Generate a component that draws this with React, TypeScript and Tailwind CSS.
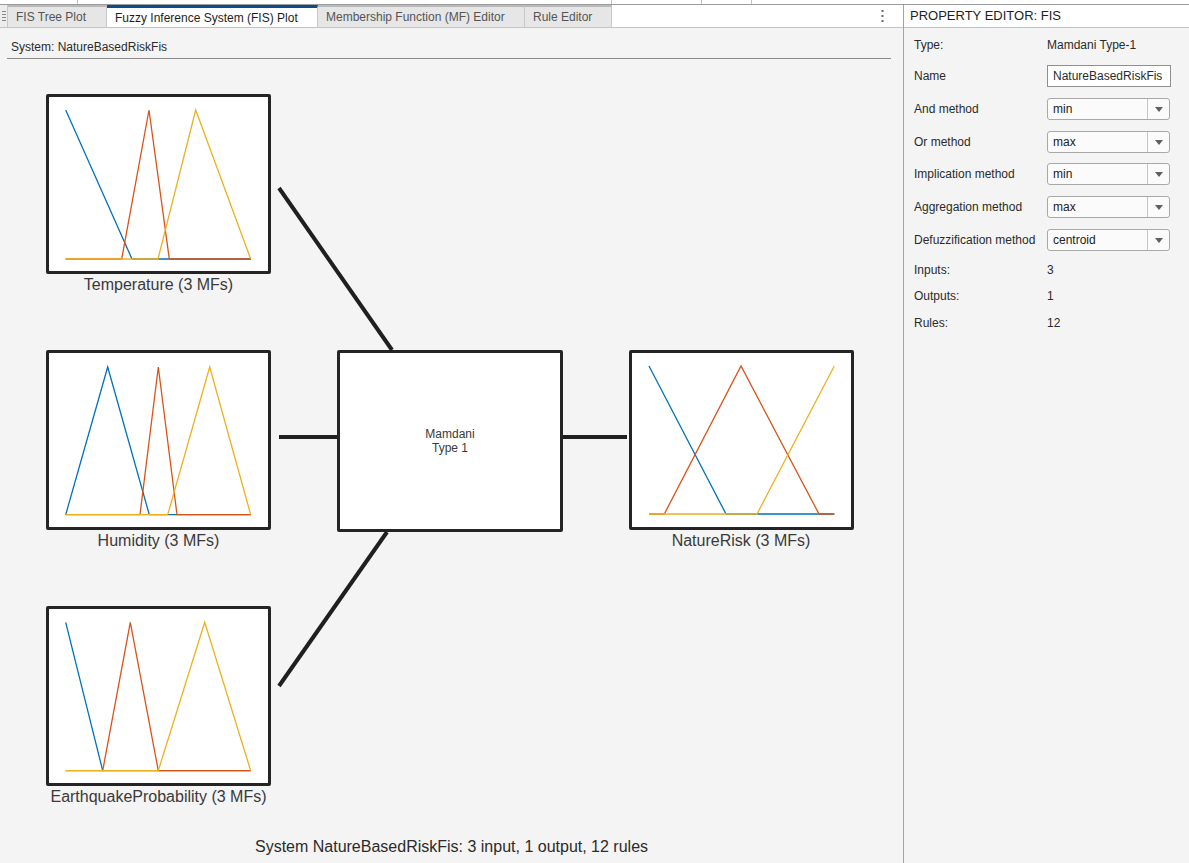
import React from 'react';

type Mf = { color: string; points: string };

const BLUE = '#0072BD';
const RED = '#D95319';
const YELLOW = '#EDB120';

// MF polylines in box coordinates (outer box = 225 x 180)
const temperatureMfs: Mf[] = [
  { color: BLUE, points: '19.7,16 86,165 205,165' },
  { color: RED, points: '19.7,165 75.7,165 103,16 123.3,165 205,165' },
  { color: YELLOW, points: '19.7,165 112,165 149.7,16 204.7,165' },
];

const humidityMfs: Mf[] = [
  { color: BLUE, points: '19.7,164.7 61.7,17 103.3,164.7 205,164.7' },
  { color: RED, points: '19.7,164.7 94,164.7 112.3,17 131,164.7 205,164.7' },
  { color: YELLOW, points: '19.7,164.7 121.7,164.7 163.7,17 204.7,164.7' },
];

const quakeMfs: Mf[] = [
  { color: BLUE, points: '19.7,16.3 56.7,164.7 205,164.7' },
  { color: RED, points: '19.7,164.7 56.7,164.7 84.3,16.3 112.3,164.7 205,164.7' },
  { color: YELLOW, points: '19.7,164.7 112.3,164.7 158.7,16.3 204.7,164.7' },
];

const riskMfs: Mf[] = [
  { color: BLUE, points: '20,16 97,164 205.3,164' },
  { color: RED, points: '20,164 35.3,164 112,16 190,164 205.3,164' },
  { color: YELLOW, points: '20,164 128,164 205.3,16' },
];

function MfBox({ label, mfs }: { label: string; mfs: Mf[] }) {
  return (
    <div className="flex flex-col items-center">
      <div className="w-[225px] h-[180px] border-[3px] border-[#242424] bg-white rounded-[2px]">
        <svg width={219} height={174} viewBox="3 3 219 174">
          {mfs.map((mf, i) => (
            <polyline
              key={i}
              points={mf.points}
              fill="none"
              stroke={mf.color}
              strokeWidth={1.3}
              strokeLinejoin="miter"
            />
          ))}
        </svg>
      </div>
      <div className="mt-[2px] text-[16px] leading-[18px] text-[#3a3a3a] whitespace-nowrap">{label}</div>
    </div>
  );
}

function Dropdown({ value }: { value: string }) {
  return (
    <div className="w-[123px] h-[22px] flex border border-[#a9a9a9] rounded-[3px] bg-[#fbfbfb]">
      <div className="flex-1 pl-[5px] flex items-center text-[12px] text-[#222]">{value}</div>
      <div className="w-[22px] border-l border-[#c6c6c6] flex items-center justify-center">
        <svg width="8" height="5" viewBox="0 0 8 5">
          <polygon points="0,0 8,0 4,5" fill="#5f5f5f" />
        </svg>
      </div>
    </div>
  );
}

function PropRow({ label, mt, children }: { label: string; mt: string; children: React.ReactNode }) {
  return (
    <div className={`flex items-center h-[22px] ${mt}`}>
      <div className="w-[133px] text-[12px] text-[#2b2b2b]">{label}</div>
      <div className="text-[12px] text-[#2b2b2b]">{children}</div>
    </div>
  );
}

const tabs = [
  { name: 'FIS Tree Plot', w: 'w-[99px]', active: false },
  { name: 'Fuzzy Inference System (FIS) Plot', w: 'w-[211px]', active: true },
  { name: 'Membership Function (MF) Editor', w: 'w-[207px]', active: false },
  { name: 'Rule Editor', w: 'w-[87px]', active: false },
];

export default function App() {
  return (
    <div className="w-[1189px] h-[863px] flex flex-col bg-[#f4f4f4] overflow-hidden font-['Liberation_Sans',Arial,sans-serif]">
      {/* bottom edge of the toolstrip above */}
      <div className="h-[5px] border-b border-[#9c9c9c] bg-white flex">
        <div className="w-[78px] border-r border-[#c4c4c4]" />
        <div className="w-[534px] border-r border-[#c4c4c4]" />
        <div className="w-[90px] border-r border-[#c4c4c4]" />
        <div className="w-[50px] border-r border-[#c4c4c4]" />
      </div>

      <div className="flex flex-1 min-h-0">
        {/* left document area */}
        <div className="flex-1 flex flex-col min-w-0">
          <div className="h-[23px] flex bg-white border-b border-[#c3c3c3]">
            <div className="w-[8px] bg-[#ececec] border-r border-[#c8c8c8] flex flex-col items-center justify-center gap-[2px]">
              <div className="w-[4px] h-px bg-[#8a8a8a]" />
              <div className="w-[4px] h-px bg-[#8a8a8a]" />
              <div className="w-[4px] h-px bg-[#8a8a8a]" />
              <div className="w-[4px] h-px bg-[#8a8a8a]" />
            </div>
            {tabs.map(t => (
              <div
                key={t.name}
                className={
                  t.active
                    ? `${t.w} shrink-0 bg-white border-t-[3px] border-t-[#0b4c8c] border-r border-r-[#c8c8c8] pl-[8px] flex items-center text-[12px] text-[#1e1e1e] whitespace-nowrap`
                    : `${t.w} shrink-0 bg-[#e6e6e6] border-t-2 border-t-[#b9b9b9] border-r border-r-[#c8c8c8] pl-[8px] flex items-center text-[12px] text-[#555] whitespace-nowrap`
                }
              >
                {t.name}
              </div>
            ))}
            <div className="flex-1 flex items-center justify-end pr-[19px]">
              <svg width="3" height="12" viewBox="0 0 3 12">
                <rect x="0.5" y="0" width="2" height="2" fill="#6a6a6a" />
                <rect x="0.5" y="5" width="2" height="2" fill="#6a6a6a" />
                <rect x="0.5" y="10" width="2" height="2" fill="#6a6a6a" />
              </svg>
            </div>
          </div>

          <div className="flex-1 flex flex-col">
            <div className="mx-[7px] mr-[12px] pt-[12px] pb-[4px] pl-[4px] border-b border-[#8a8a8a] text-[12px] leading-[14px] text-[#2b2b2b]">
              System: NatureBasedRiskFis
            </div>

            <div className="relative ml-[46px] mt-[35px] w-[808px] grid grid-cols-[225px_66px_226px_66px_225px] grid-rows-[256px_256px_auto]">
              <div className="col-start-1 row-start-1">
                <MfBox label="Temperature (3 MFs)" mfs={temperatureMfs} />
              </div>
              <div className="col-start-1 row-start-2">
                <MfBox label="Humidity (3 MFs)" mfs={humidityMfs} />
              </div>
              <div className="col-start-1 row-start-3">
                <MfBox label="EarthquakeProbability (3 MFs)" mfs={quakeMfs} />
              </div>
              <div className="col-start-3 row-start-2">
                <div className="w-[226px] h-[182px] border-[3px] border-[#242424] bg-white rounded-[2px] flex flex-col items-center justify-center text-[12px] leading-[14px] text-[#3a3a3a]">
                  <span>Mamdani</span>
                  <span>Type 1</span>
                </div>
              </div>
              <div className="col-start-5 row-start-2 -ml-px">
                <MfBox label="NatureRisk (3 MFs)" mfs={riskMfs} />
              </div>

              {/* connectors */}
              <svg className="absolute inset-0 pointer-events-none" width="808" height="712">
                <line x1="233" y1="94" x2="346" y2="256" stroke="#1f1f1f" strokeWidth="4" />
                <line x1="233" y1="343" x2="291" y2="343" stroke="#1f1f1f" strokeWidth="4" />
                <line x1="233" y1="592" x2="341" y2="438" stroke="#1f1f1f" strokeWidth="4" />
                <line x1="517" y1="343" x2="581" y2="343" stroke="#1f1f1f" strokeWidth="4" />
              </svg>
            </div>

            <div className="mt-[32px] text-center text-[16px] leading-[18px] text-[#2b2b2b]">
              System NatureBasedRiskFis: 3 input, 1 output, 12 rules
            </div>
          </div>
        </div>

        {/* property editor */}
        <div className="w-[286px] shrink-0 border-l border-[#a3a3a3] flex flex-col">
          <div className="h-[23px] bg-white border-b border-[#c3c3c3] pl-[6px] flex items-center text-[13px] text-[#1e1e1e]">
            PROPERTY EDITOR: FIS
          </div>
          <div className="pl-[10px] pt-[6px] flex flex-col">
            <PropRow label="Type:" mt="mt-0">Mamdani Type-1</PropRow>
            <PropRow label="Name" mt="mt-[9px]">
              <div className="w-[124px] h-[22px] border border-[#8f8f8f] bg-white pl-[5px] flex items-center whitespace-nowrap overflow-hidden">
                NatureBasedRiskFis
              </div>
            </PropRow>
            <PropRow label="And method" mt="mt-[11px]"><Dropdown value="min" /></PropRow>
            <PropRow label="Or method" mt="mt-[11px]"><Dropdown value="max" /></PropRow>
            <PropRow label="Implication method" mt="mt-[10px]"><Dropdown value="min" /></PropRow>
            <PropRow label="Aggregation method" mt="mt-[11px]"><Dropdown value="max" /></PropRow>
            <PropRow label="Defuzzification method" mt="mt-[11px]"><Dropdown value="centroid" /></PropRow>
            <PropRow label="Inputs:" mt="mt-[8px]">3</PropRow>
            <PropRow label="Outputs:" mt="mt-[4px]">1</PropRow>
            <PropRow label="Rules:" mt="mt-[5px]">12</PropRow>
          </div>
        </div>
      </div>
    </div>
  );
}
